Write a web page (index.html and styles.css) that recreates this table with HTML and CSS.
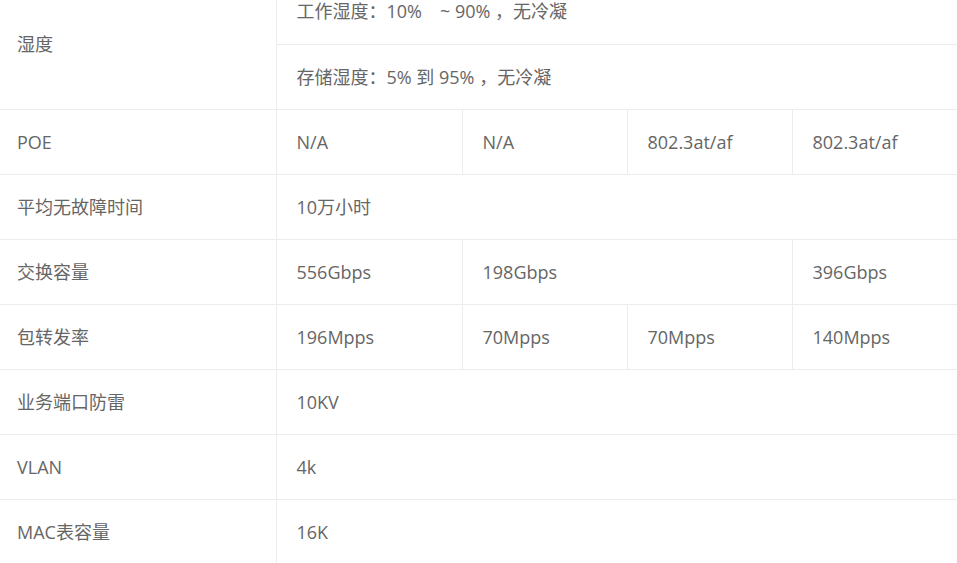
FILE: index.html
```html
<!DOCTYPE html>
<html lang="zh">
<head>
<meta charset="utf-8">
<link rel="stylesheet" href="styles.css">
</head>
<body>
<table class="spec">
  <colgroup>
    <col class="c-name">
    <col class="c-a">
    <col class="c-b">
    <col class="c-c">
    <col class="c-d">
  </colgroup>
  <tbody>
    <tr>
      <td class="name" rowspan="2">湿度</td>
      <td colspan="4">工作湿度：10%　~ 90% ，无冷凝</td>
    </tr>
    <tr>
      <td colspan="4">存储湿度：5% 到 95% ，无冷凝</td>
    </tr>
    <tr>
      <td class="name">POE</td>
      <td>N/A</td>
      <td>N/A</td>
      <td>802.3at/af</td>
      <td>802.3at/af</td>
    </tr>
    <tr>
      <td class="name">平均无故障时间</td>
      <td colspan="4">10万小时</td>
    </tr>
    <tr>
      <td class="name">交换容量</td>
      <td>556Gbps</td>
      <td colspan="2">198Gbps</td>
      <td>396Gbps</td>
    </tr>
    <tr>
      <td class="name">包转发率</td>
      <td>196Mpps</td>
      <td>70Mpps</td>
      <td>70Mpps</td>
      <td>140Mpps</td>
    </tr>
    <tr>
      <td class="name">业务端口防雷</td>
      <td colspan="4">10KV</td>
    </tr>
    <tr>
      <td class="name">VLAN</td>
      <td colspan="4">4k</td>
    </tr>
    <tr>
      <td class="name">MAC表容量</td>
      <td colspan="4">16K</td>
    </tr>
  </tbody>
</table>
</body>
</html>
```
FILE: styles.css
```css
html, body {
  margin: 0;
  padding: 0;
  background: #fff;
  overflow: hidden;
}
.spec {
  margin-top: -21px;
  width: 957px;
  border-collapse: collapse;
  table-layout: fixed;
  font-family: "Open Sans", "Noto Sans CJK SC", sans-serif;
  font-size: 18px;
  color: #666;
}
.c-name { width: 276px; }
.c-a { width: 186px; }
.c-b { width: 165px; }
.c-c { width: 165px; }
.c-d { width: 165px; }
.spec tr { height: 65px; }
.spec td {
  border: 1px solid #ececec;
  border-top: none;
  padding: 0 0 0 20px;
  vertical-align: middle;
  white-space: nowrap;
  line-height: 24px;
}
.spec td:last-child { border-right: none; }
.spec td.name {
  padding-left: 17px;
  border-left: none;
}
```
